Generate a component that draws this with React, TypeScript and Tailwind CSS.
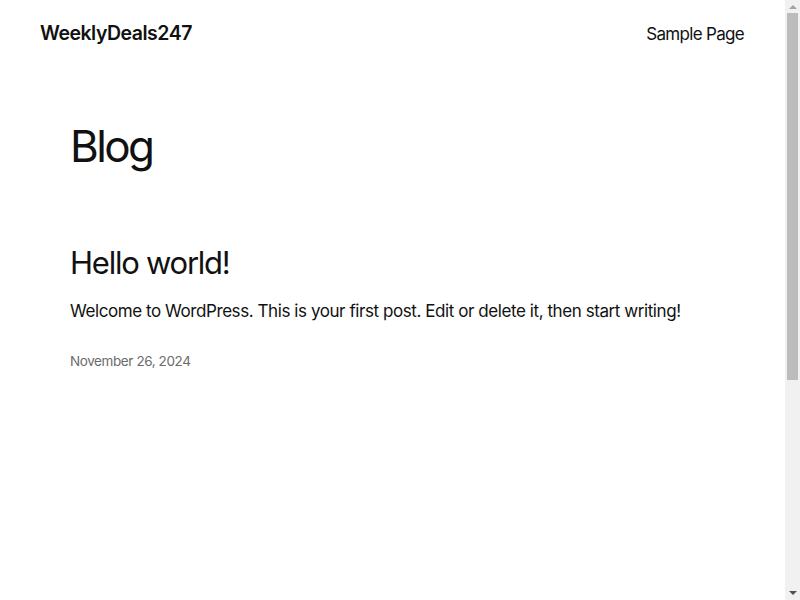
import React from 'react';

const App = () => {
  return (
    <div className="flex h-screen overflow-hidden bg-white text-[#111111] font-['Inter','Liberation_Sans',sans-serif]">
      <div className="flex-1">
        <header className="flex items-center justify-between pl-10 pr-[41px] pt-[20px] h-[48px]">
          <a href="#" className="text-[19.5px] font-semibold tracking-[-0.025em] leading-none">
            WeeklyDeals247
          </a>
          <nav>
            <a href="#" className="text-[17px] tracking-[-0.04em] leading-none">
              Sample Page
            </a>
          </nav>
        </header>

        <main className="px-[70px]">
          <h1 className="mt-[76px] text-[44px] font-normal tracking-[-0.06em] leading-none">Blog</h1>

          <article className="mt-[79px]">
            <h2 className="text-[31px] font-normal tracking-[-0.04em] leading-none">Hello world!</h2>
            <p className="mt-[22px] text-[17px] tracking-[-0.025em] leading-[1.4]">
              Welcome to WordPress. This is your first post. Edit or delete it, then start writing!
            </p>
            <p className="mt-[27px] text-[13.5px] text-[#6b6b6b] tracking-[-0.03em]">November 26, 2024</p>
          </article>
        </main>
      </div>

      {/* scrollbar */}
      <div className="flex w-[15px] flex-col items-center bg-[#f1f1f1]">
        <div className="flex h-[13px] items-center justify-center">
          <div className="h-0 w-0 border-x-[4px] border-b-[4px] border-x-transparent border-b-[#a3a3a3]" />
        </div>
        <div className="h-[367px] w-[11px] bg-[#bcbcbc]" />
        <div className="flex-1" />
        <div className="flex h-[15px] items-center justify-center">
          <div className="h-0 w-0 border-x-[4px] border-t-[4px] border-x-transparent border-t-[#505050]" />
        </div>
      </div>
    </div>
  );
};

export default App;
